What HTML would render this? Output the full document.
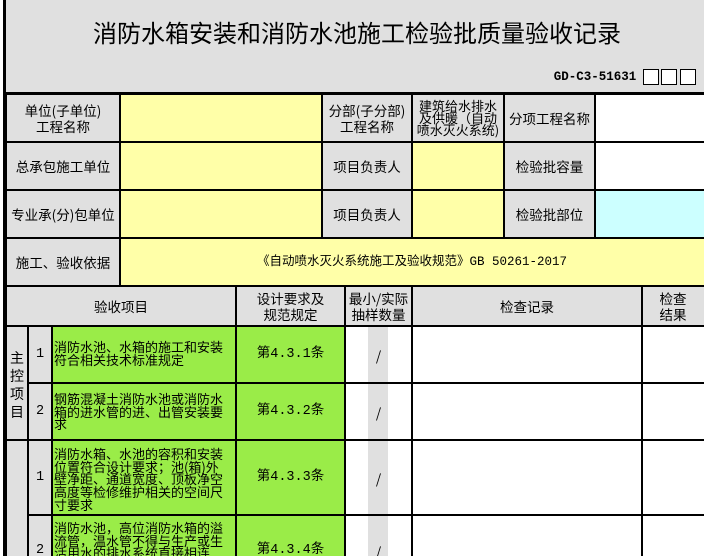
<!DOCTYPE html>
<html><head><meta charset="utf-8"><style>
*{margin:0;padding:0;box-sizing:border-box}
body{width:704px;height:556px;overflow:hidden;background:#fff;position:relative;font-family:"Noto Sans CJK SC","Liberation Sans",sans-serif;color:#000}
.c{position:absolute;display:flex;align-items:center;justify-content:center;text-align:center;font-size:13.5px;line-height:16px;overflow:hidden}
.g{background:#e0e0e0}.y{background:#ffffa8}.gr{background:#9aec48}.cy{background:#ccffff}.w{background:#fff}
.h{position:absolute;background:#000}
.t{justify-content:flex-start;text-align:left;align-items:flex-start;padding:12px 12px 0 2px;line-height:12.7px;font-size:13px}
.box{position:absolute;top:69px;width:16px;height:16px;border:1.5px solid #000;background:#fff}
.m{font-family:"Liberation Mono","Noto Sans CJK SC",monospace}
</style></head><body>
<div class="c g" style="left:5px;top:0;width:699px;height:93px"></div>
<div class="h" style="left:3px;top:0;width:3px;height:556px"></div>
<div class="c" style="left:60px;top:15px;width:594px;height:34px;font-size:24px">消防水箱安装和消防水池施工检验批质量验收记录</div>
<div class="c" style="left:548px;top:69px;width:94px;height:16px;font-family:'Liberation Mono',monospace;font-weight:bold;font-size:12.5px">GD-C3-51631</div>
<div class="box" style="left:643px"></div><div class="box" style="left:661px"></div><div class="box" style="left:680px"></div>

<div class="c g" style="left:6px;top:93px;width:114px;height:49px">单位(子单位)<br>工程名称</div>
<div class="c y" style="left:120px;top:93px;width:202px;height:49px"></div>
<div class="c g" style="left:322px;top:93px;width:90px;height:49px">分部(子分部)<br>工程名称</div>
<div class="c g" style="left:412px;top:93px;width:92px;height:49px;line-height:12px;font-size:13px">建筑给水排水<br>及供暖（自动<br>喷水灭火系统)</div>
<div class="c g" style="left:504px;top:93px;width:91px;height:49px">分项工程名称</div>
<div class="c w" style="left:595px;top:93px;width:109px;height:49px"></div>
<div class="c g" style="left:6px;top:142px;width:114px;height:48px">总承包施工单位</div>
<div class="c y" style="left:120px;top:142px;width:202px;height:48px"></div>
<div class="c g" style="left:322px;top:142px;width:90px;height:48px">项目负责人</div>
<div class="c y" style="left:412px;top:142px;width:92px;height:48px"></div>
<div class="c g" style="left:504px;top:142px;width:91px;height:48px">检验批容量</div>
<div class="c g" style="left:6px;top:190px;width:114px;height:48px">专业承(分)包单位</div>
<div class="c y" style="left:120px;top:190px;width:202px;height:48px"></div>
<div class="c g" style="left:322px;top:190px;width:90px;height:48px">项目负责人</div>
<div class="c y" style="left:412px;top:190px;width:92px;height:48px"></div>
<div class="c g" style="left:504px;top:190px;width:91px;height:48px">检验批部位</div>
<div class="c cy" style="left:595px;top:190px;width:109px;height:48px"></div>
<div class="c g" style="left:6px;top:238px;width:114px;height:48px">施工、验收依据</div>
<div class="c y m" style="left:120px;top:238px;width:584px;height:48px;font-size:12.5px">《自动喷水灭火系统施工及验收规范》GB 50261-2017</div>
<div class="c g" style="left:6px;top:286px;width:230px;height:40px">验收项目</div>
<div class="c g" style="left:236px;top:286px;width:109px;height:40px">设计要求及<br>规范规定</div>
<div class="c g" style="left:345px;top:286px;width:67px;height:40px">最小/实际<br>抽样数量</div>
<div class="c g" style="left:412px;top:286px;width:230px;height:40px">检查记录</div>
<div class="c g" style="left:642px;top:286px;width:62px;height:40px">检查<br>结果</div>
<div class="c g" style="left:6px;top:326px;width:22px;height:230px"></div>
<div class="c" style="left:6px;top:340px;width:22px;height:90px;line-height:18px;font-size:14px">主<br>控<br>项<br>目</div>
<div class="c g" style="left:28px;top:326px;width:24px;height:230px"></div>
<div class="c g" style="left:368px;top:326px;width:20px;height:230px"></div>

<div class="c m" style="left:28px;top:326px;width:24px;height:57px">1</div>
<div class="c gr t" style="left:52px;top:326px;width:184px;height:57px;padding-top:15px">消防水池、水箱的施工和安装符合相关技术标准规定</div>
<div class="c gr m" style="left:236px;top:326px;width:109px;height:57px">第4.3.1条</div>
<div class="c" style="left:345px;top:326px;width:67px;height:57px">/</div>

<div class="c m" style="left:28px;top:383px;width:24px;height:57px">2</div>
<div class="c gr t" style="left:52px;top:383px;width:184px;height:57px;padding-top:10px">钢筋混凝土消防水池或消防水箱的进水管的进、出管安装要求</div>
<div class="c gr m" style="left:236px;top:383px;width:109px;height:57px">第4.3.2条</div>
<div class="c" style="left:345px;top:383px;width:67px;height:57px">/</div>

<div class="c m" style="left:28px;top:440px;width:24px;height:75px">1</div>
<div class="c gr t" style="left:52px;top:440px;width:184px;height:75px;padding-top:8px">消防水箱、水池的容积和安装位置符合设计要求；池(箱)外壁净距、通道宽度、顶板净空高度等检修维护相关的空间尺寸要求</div>
<div class="c gr m" style="left:236px;top:440px;width:109px;height:75px">第4.3.3条</div>
<div class="c" style="left:345px;top:440px;width:67px;height:75px">/</div>

<div class="c m" style="left:28px;top:515px;width:24px;height:41px;padding-top:30px">2</div>
<div class="c gr t" style="left:52px;top:515px;width:184px;height:41px;padding-top:7px">消防水池，高位消防水箱的溢流管，温水管不得与生产或生活用水的排水系统直接相连</div>
<div class="c gr m" style="left:236px;top:515px;width:109px;height:41px;padding-top:30px">第4.3.4条</div>
<div class="c" style="left:345px;top:515px;width:67px;height:41px;padding-top:30px">/</div>

<div class="h" style="left:5px;top:92px;width:699px;height:3px"></div>
<div class="h" style="left:5px;top:141px;width:699px;height:2px"></div>
<div class="h" style="left:5px;top:189px;width:699px;height:2px"></div>
<div class="h" style="left:5px;top:237px;width:699px;height:2px"></div>
<div class="h" style="left:5px;top:285px;width:699px;height:2px"></div>
<div class="h" style="left:5px;top:325px;width:699px;height:2px"></div>
<div class="h" style="left:28px;top:382px;width:676px;height:2px"></div>
<div class="h" style="left:5px;top:439px;width:699px;height:2px"></div>
<div class="h" style="left:28px;top:514px;width:676px;height:2px"></div>
<div class="h" style="left:5px;top:93px;width:2px;height:463px"></div>
<div class="h" style="left:119px;top:93px;width:2px;height:193px"></div>
<div class="h" style="left:321px;top:93px;width:2px;height:145px"></div>
<div class="h" style="left:411px;top:93px;width:2px;height:145px"></div>
<div class="h" style="left:503px;top:93px;width:2px;height:145px"></div>
<div class="h" style="left:594px;top:93px;width:2px;height:145px"></div>
<div class="h" style="left:27px;top:326px;width:2px;height:230px"></div>
<div class="h" style="left:51px;top:326px;width:2px;height:230px"></div>
<div class="h" style="left:235px;top:286px;width:2px;height:270px"></div>
<div class="h" style="left:344px;top:286px;width:2px;height:270px"></div>
<div class="h" style="left:411px;top:286px;width:2px;height:270px"></div>
<div class="h" style="left:641px;top:286px;width:2px;height:270px"></div>
</body></html>
